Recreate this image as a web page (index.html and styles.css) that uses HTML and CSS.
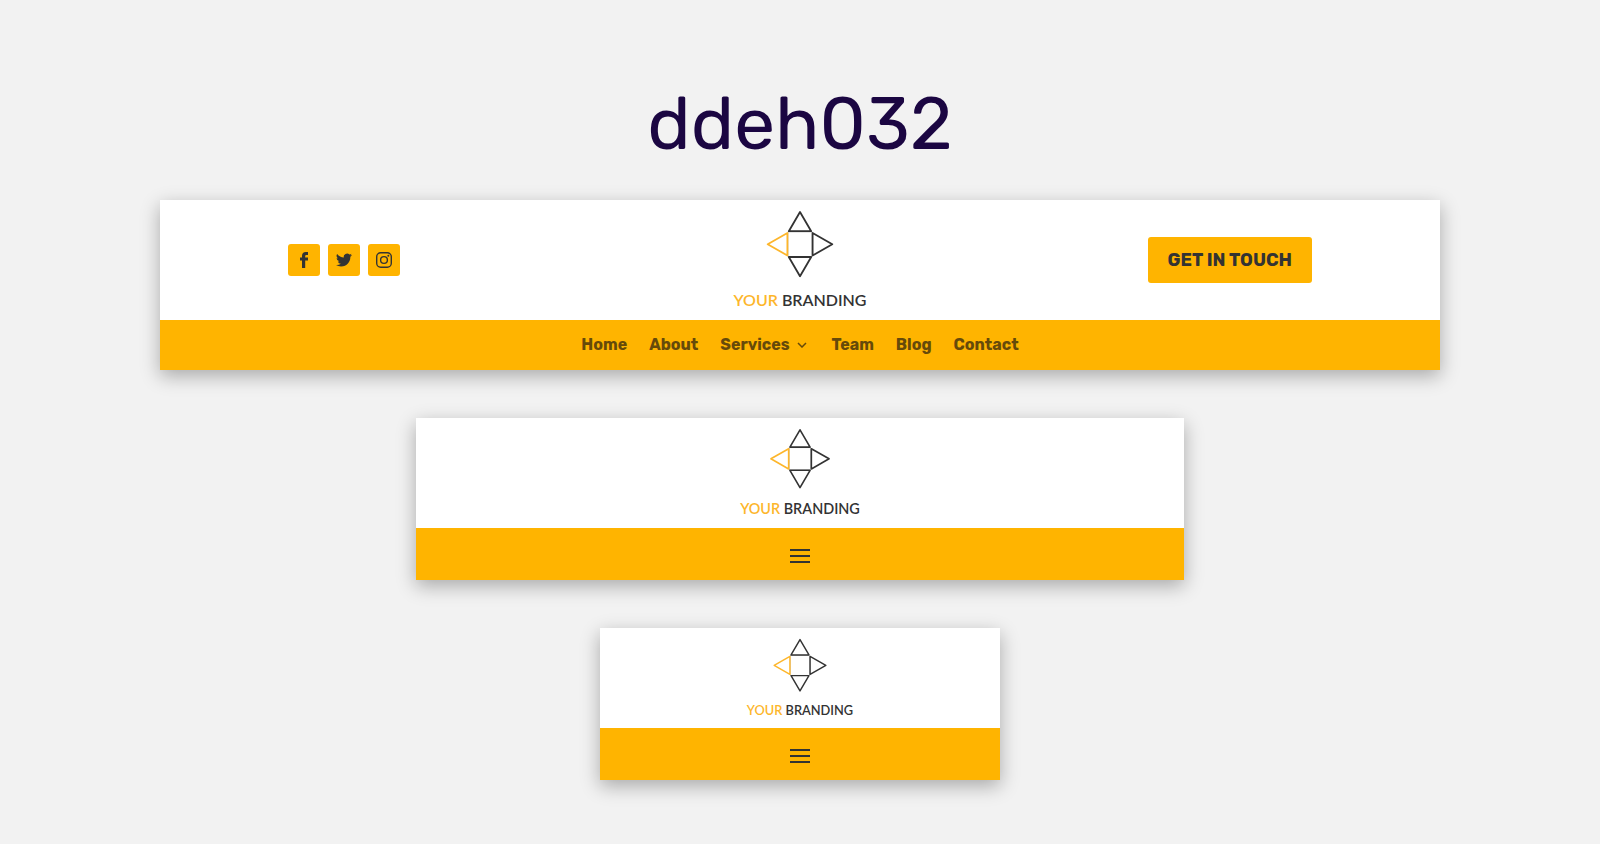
FILE: index.html
```html
<!DOCTYPE html>
<html lang="en">
<head>
<meta charset="utf-8">
<meta name="viewport" content="width=device-width, initial-scale=1">
<title>ddeh032</title>
<link rel="stylesheet" href="styles.css">
</head>
<body>
<svg class="defs" aria-hidden="true">
  <symbol id="mark" viewBox="0 0 140 100">
    <rect class="logo-square" x="58" y="22" width="24" height="24.5"/>
    <g class="logo-dark">
      <path d="M70 2 L81.2 21.2 H58.8 Z"/>
      <path d="M82.6 23 L102.3 34.2 L82.6 45.5 Z"/>
      <path d="M58.8 47 H81.2 L70 66.2 Z"/>
    </g>
    <path class="logo-gold" d="M57.4 23 V45.5 L37.7 34.2 Z"/>
  </symbol>
</svg>
<main class="page">
  <h1 class="title">ddeh032</h1>

  <header class="card card-desktop">
    <div class="top top-desktop">
      <div class="social">
        <a class="social-link" href="#" aria-label="Facebook"><svg viewBox="0 0 16 16"><path d="M6 16V8.6H4V5.6h2V4C6 1.3 7.4 0 9.8 0H12v3h-1.4C9.6 3 9.2 3.4 9.2 4.2v1.4H12v3H9.2V16z"/></svg></a>
        <a class="social-link" href="#" aria-label="Twitter"><svg viewBox="0 0 24 24"><path d="M24 4.6a10 10 0 0 1-2.8.8 5 5 0 0 0 2.1-2.7 10 10 0 0 1-3.1 1.2 4.9 4.9 0 0 0-8.4 4.5A14 14 0 0 1 1.7 3.1a4.9 4.9 0 0 0 1.5 6.6 5 5 0 0 1-2.2-.6 4.9 4.9 0 0 0 3.9 4.9 5 5 0 0 1-2.2.1 4.9 4.9 0 0 0 4.6 3.4A9.9 9.9 0 0 1 0 19.5a14 14 0 0 0 7.5 2.2c9.1 0 14-7.5 14-14v-.6A10 10 0 0 0 24 4.6z"/></svg></a>
        <a class="social-link" href="#" aria-label="Instagram"><svg viewBox="0 0 16 16"><g class="insta-lines"><rect x=".7" y=".7" width="14.6" height="14.6" rx="4"/><circle cx="8" cy="8" r="3.4"/></g><circle cx="12.3" cy="3.7" r="1"/></svg></a>
      </div>
      <a class="logo-link" href="#"><svg class="logo logo-large" viewBox="0 0 140 100"><use href="#mark"/><text class="logo-text" x="70" y="96" text-anchor="middle"><tspan class="logo-your">YOUR</tspan> BRANDING</text></svg></a>
      <a class="cta" href="#">GET IN TOUCH</a>
    </div>
    <nav class="bar" aria-label="Main">
      <ul class="menu">
        <li><a href="#">Home</a></li>
        <li><a href="#">About</a></li>
        <li><a class="has-menu" href="#">Services<svg class="chevron" viewBox="0 0 10 6"><path d="M1 1l4 4 4-4"/></svg></a></li>
        <li><a href="#">Team</a></li>
        <li><a href="#">Blog</a></li>
        <li><a href="#">Contact</a></li>
      </ul>
    </nav>
  </header>

  <header class="card card-tablet">
    <div class="top">
      <a class="logo-link" href="#"><svg class="logo logo-medium" viewBox="0 0 140 100"><use href="#mark"/><text class="logo-text" x="70" y="96" text-anchor="middle"><tspan class="logo-your">YOUR</tspan> BRANDING</text></svg></a>
    </div>
    <div class="bar bar-mobile">
      <button class="burger" type="button" aria-label="Open menu"><span></span><span></span><span></span></button>
    </div>
  </header>

  <header class="card card-phone">
    <div class="top">
      <a class="logo-link" href="#"><svg class="logo logo-small" viewBox="0 0 140 100"><use href="#mark"/><text class="logo-text" x="70" y="96" text-anchor="middle"><tspan class="logo-your">YOUR</tspan> BRANDING</text></svg></a>
    </div>
    <div class="bar bar-mobile">
      <button class="burger" type="button" aria-label="Open menu"><span></span><span></span><span></span></button>
    </div>
  </header>
</main>
</body>
</html>
```
FILE: styles.css
```css
* {
  box-sizing: border-box;
}

body {
  margin: 0;
  background: #f2f2f2;
  color: #333;
  font-family: Rubik, Inter, sans-serif;
  font-size: 16px;
}

a {
  color: inherit;
  text-decoration: none;
}

.defs {
  position: absolute;
  width: 0;
  height: 0;
}

.page {
  display: flex;
  flex-direction: column;
  align-items: center;
  gap: 48px;
  padding: 80px 0 64px;
}

.title {
  margin: 0 0 -16px;
  color: #1b0642;
  font-size: 73px;
  font-weight: 400;
  line-height: 88px;
}

.card {
  background: #fff;
  box-shadow: 0 6px 18px rgba(0, 0, 0, 0.3);
}

.card-desktop {
  width: 80%;
}

.card-tablet {
  width: 48%;
}

.card-phone {
  width: 25%;
}

.top {
  display: flex;
  justify-content: center;
  padding: 10px 0;
}

.top-desktop {
  display: grid;
  grid-template-columns: 1fr auto 1fr;
  align-items: center;
  padding: 10px 10%;
}

.social {
  display: flex;
  gap: 8px;
}

.social-link {
  display: grid;
  place-items: center;
  width: 32px;
  height: 32px;
  border-radius: 3px;
  background: #ffb400;
}

.social-link svg {
  width: 16px;
  height: 16px;
  fill: #333;
}

.social-link .insta-lines {
  fill: none;
  stroke: #333;
  stroke-width: 1.4;
}

.logo-link,
.logo {
  display: block;
}

.logo-large {
  height: 100px;
}

.logo-medium {
  height: 90px;
}

.logo-small {
  height: 80px;
}

.logo-square {
  fill: none;
  stroke: #aaa;
  stroke-width: 0.6;
}

.logo-dark,
.logo-gold {
  fill: none;
  stroke: #333;
  stroke-width: 1.8;
  stroke-linejoin: round;
}

.logo-gold {
  stroke: #fdb62b;
}

.logo-text {
  fill: #333;
  font-family: Lato, sans-serif;
  font-size: 16px;
  font-weight: 600;
}

.logo-your {
  fill: #fdb62b;
}

.cta {
  justify-self: end;
  padding: 12px 20px;
  border-radius: 3px;
  background: #ffb400;
  font-size: 18px;
  font-weight: 700;
  line-height: 22px;
}

.bar {
  display: flex;
  justify-content: center;
  background: #ffb400;
}

.menu {
  display: flex;
  gap: 22px;
  margin: 0;
  padding: 15px 0;
  color: #664a0a;
  font-weight: 700;
  line-height: 20px;
  list-style: none;
}

.has-menu {
  display: flex;
  align-items: center;
  gap: 7px;
  padding-right: 3px;
}

.chevron {
  width: 10px;
  height: 6px;
  fill: none;
  stroke: currentColor;
  stroke-width: 1.5;
}

.bar-mobile {
  padding: 16px 0 12px;
}

.burger {
  display: flex;
  flex-direction: column;
  gap: 4px;
  width: 20px;
  padding: 5px 0;
  border: 0;
  background: none;
  cursor: pointer;
}

.burger span {
  width: 100%;
  height: 2px;
  background: #333;
}
```
